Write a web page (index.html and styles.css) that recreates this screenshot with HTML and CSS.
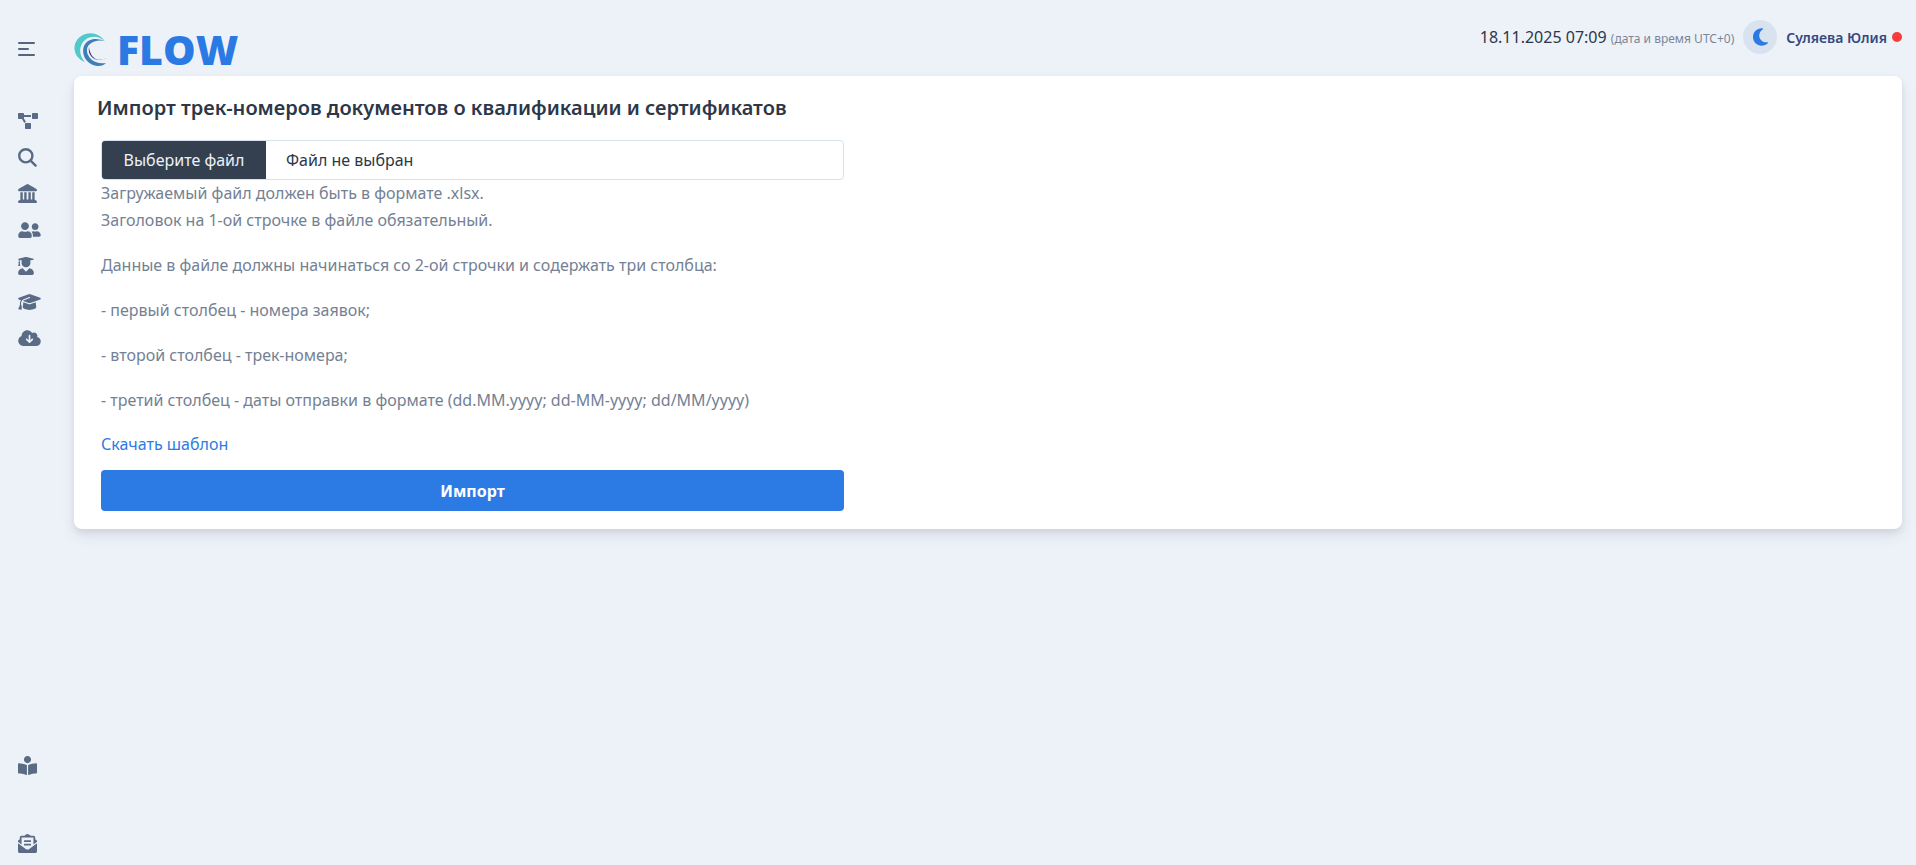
FILE: index.html
```html
<!DOCTYPE html>
<html lang="ru">
<head>
    <meta charset="UTF-8">
    <meta name="viewport" content="width=device-width, initial-scale=1.0">
    <title>Импорт трек-номеров</title>
    <link rel="stylesheet" href="styles.css">
</head>
<body>
    <div class="app">
        <aside class="sidebar">
            <button type="button" class="menu-toggle" aria-label="Меню">
                <span class="bar"></span>
                <span class="bar bar-short"></span>
                <span class="bar"></span>
            </button>

            <nav class="nav-group">
                <a class="nav-item" href="#"><svg class="icon" width="20" height="16" viewBox="0 0 640 512"><path d="M384 320H256c-17.67 0-32 14.33-32 32v128c0 17.67 14.33 32 32 32h128c17.67 0 32-14.33 32-32V352c0-17.67-14.33-32-32-32zM192 32c0-17.67-14.33-32-32-32H32C14.33 0 0 14.33 0 32v128c0 17.67 14.33 32 32 32h95.72l73.16 128.04C211.98 300.98 232.4 288 256 288h.28L192 175.51V128h224V64H192V32zM608 0H480c-17.67 0-32 14.33-32 32v128c0 17.67 14.33 32 32 32h128c17.67 0 32-14.33 32-32V32c0-17.67-14.33-32-32-32z"/></svg></a>
                <a class="nav-item" href="#"><svg class="icon icon-line" width="19" height="19" viewBox="0 0 19 19"><circle cx="7.8" cy="7.8" r="6.6"/><path d="M12.6 12.6l5 5"/></svg></a>
                <a class="nav-item" href="#"><svg class="icon" width="19" height="19" viewBox="0 0 512 512"><path d="M240.1 4.2c9.8-5.6 21.9-5.6 31.8 0l171.8 98.1L448 104l0 .9 47.9 27.4c12.6 7.2 18.8 22 15.1 36s-16.4 23.8-30.9 23.8H32c-14.5 0-27.2-9.8-30.9-23.8s2.5-28.8 15.1-36L64 104.9V104l4.4-1.6L240.1 4.2zM64 224h64V416h40V224h64V416h48V224h64V416h40V224h64V420.3c.6 .3 1.2 .7 1.8 1.1l48 32c11.7 7.8 17 22.4 12.9 35.9S494.1 512 480 512H32c-14.1 0-26.5-9.2-30.6-22.7s1.1-28.1 12.9-35.9l48-32c.6-.4 1.2-.7 1.8-1.1V224z"/></svg></a>
                <a class="nav-item" href="#"><svg class="icon" width="23" height="18" viewBox="0 0 640 512"><path d="M192 256c61.9 0 112-50.1 112-112S253.9 32 192 32 80 82.1 80 144s50.1 112 112 112zm76.8 32h-8.3c-20.8 10-43.9 16-68.5 16s-47.6-6-68.5-16h-8.3C51.6 288 0 339.6 0 403.2V432c0 26.5 21.5 48 48 48h288c26.5 0 48-21.5 48-48v-28.8c0-63.6-51.6-115.2-115.2-115.2zM480 256c53 0 96-43 96-96s-43-96-96-96-96 43-96 96 43 96 96 96zm48 32h-3.8c-13.9 4.8-28.6 8-44.2 8s-30.3-3.2-44.2-8H432c-20.4 0-39.2 5.9-55.7 15.4 24.4 26.3 39.7 61.2 39.7 99.8v38.4c0 2.2-.5 4.3-.6 6.4H592c26.5 0 48-21.5 48-48 0-61.9-50.1-112-112-112z"/></svg></a>
                <a class="nav-item" href="#"><svg class="icon" width="16" height="18" viewBox="0 0 448 512"><path d="M319.4 320.6L224 416l-95.4-95.4C57.1 323.7 0 382.2 0 454.4v9.6c0 26.5 21.5 48 48 48h352c26.5 0 48-21.5 48-48v-9.6c0-72.2-57.1-130.7-128.6-133.8zM13.6 79.8l6.4 1.5v58.4c-7 4.2-12 11.5-12 20.3 0 8.4 4.6 15.4 11.1 19.7L3.5 242c-1.7 6.9 2.1 14 7.6 14h41.8c5.5 0 9.3-7.1 7.6-14l-15.6-62.3C51.4 175.4 56 168.4 56 160c0-8.8-5-16.1-12-20.3V87.1l66 15.9c-8.6 17.2-14 36.4-14 57 0 70.7 57.3 128 128 128s128-57.3 128-128c0-20.6-5.3-39.8-14-57l96.3-23.2c18.2-4.4 18.2-27.1 0-31.5l-190.4-46c-13-3.1-26.7-3.1-39.7 0L13.6 48.2c-18.1 4.4-18.1 27.2 0 31.6z"/></svg></a>
                <a class="nav-item" href="#"><svg class="icon" width="23" height="18" viewBox="0 0 640 512"><path d="M320 32c-8.1 0-16.1 1.4-23.7 4.1L15.8 137.4C6.3 140.9 0 149.9 0 160s6.3 19.1 15.8 22.6l57.9 20.9C57.3 229.3 48 259.8 48 291.9v28.1c0 28.4-10.8 57.7-22.3 80.8c-6.5 13-13.9 25.8-22.5 37.6C0 442.7-.9 448.3 .9 453.4s6 8.9 11.2 10.2l64 16c4.2 1.1 8.7 .3 12.4-2s6.3-6.1 7.1-10.4c8.6-42.8 4.3-81.2-2.1-108.7C90.3 344.3 86 329.8 80 316.5V291.9c0-30.2 10.2-58.7 27.9-81.5c12.9-15.5 29.6-28 49.2-35.7l157-61.7c8.2-3.2 17.5 .8 20.7 9s-.8 17.5-9 20.7l-157 61.7c-12.4 4.9-23.3 12.4-32.2 21.6l159.6 57.6c7.6 2.7 15.6 4.1 23.7 4.1s16.1-1.4 23.7-4.1L624.2 182.6c9.5-3.4 15.8-12.5 15.8-22.6s-6.3-19.1-15.8-22.6L343.7 36.1C336.1 33.4 328.1 32 320 32zM128 408c0 35.3 86 72 192 72s192-36.7 192-72L496.7 262.6 354.5 314c-11.1 4-22.8 6-34.5 6s-23.5-2-34.5-6L143.3 262.6 128 408z"/></svg></a>
                <a class="nav-item" href="#"><svg class="icon" width="23" height="18" viewBox="0 0 640 512"><path d="M144 480C64.5 480 0 415.5 0 336c0-62.8 40.2-116.2 96.2-135.9c-.1-2.7-.2-5.4-.2-8.1c0-88.4 71.6-160 160-160c59.3 0 111 32.2 138.7 80.2C409.9 102 428.3 96 448 96c53 0 96 43 96 96c0 12.2-2.3 23.8-6.4 34.6C596 238.4 640 290.1 640 352c0 70.7-57.3 128-128 128H144zm79-167l80 80c9.4 9.4 24.6 9.4 33.9 0l80-80c9.4-9.4 9.4-24.6 0-33.9s-24.6-9.4-33.9 0l-39 39V184c0-13.3-10.7-24-24-24s-24 10.7-24 24V318.1l-39-39c-9.4-9.4-24.6-9.4-33.9 0s-9.4 24.6 0 33.9z"/></svg></a>
            </nav>

            <nav class="nav-group nav-bottom">
                <a class="nav-item" href="#"><svg class="icon" width="19" height="19" viewBox="0 0 512 512"><path d="M352 96c0-53.02-42.98-96-96-96s-96 42.98-96 96 42.98 96 96 96 96-42.98 96-96zM233.59 241.1c-59.33-36.32-155.43-46.3-203.79-49.05C13.55 191.13 0 203.51 0 219.14v222.8c0 14.33 11.59 26.28 26.49 27.05 43.66 2.29 131.99 10.68 193.04 41.43 9.37 4.72 20.48-1.71 20.48-11.87V252.56c-.01-4.67-2.32-8.95-6.42-11.46zm248.61-49.05c-48.35 2.74-144.46 12.73-203.78 49.05-4.1 2.51-6.41 6.96-6.41 11.63v245.79c0 10.19 11.14 16.63 20.54 11.9 61.04-30.72 149.32-39.11 192.97-41.4 14.9-.78 26.49-12.73 26.49-27.06V219.14c-.01-15.63-13.56-28.01-29.81-27.09z"/></svg></a>
                <a class="nav-item" href="#"><svg class="icon" width="19" height="19" viewBox="0 0 512 512"><path d="M176 216h160c8.84 0 16-7.16 16-16v-16c0-8.84-7.16-16-16-16H176c-8.84 0-16 7.16-16 16v16c0 8.84 7.16 16 16 16zm-16 80c0 8.84 7.16 16 16 16h160c8.84 0 16-7.16 16-16v-16c0-8.84-7.16-16-16-16H176c-8.84 0-16 7.16-16 16v16zm96 121.13c-16.42 0-32.84-5.06-46.86-15.19L0 250.86V464c0 26.51 21.49 48 48 48h416c26.51 0 48-21.49 48-48V250.86L302.86 401.94c-14.02 10.12-30.44 15.19-46.86 15.19zm237.61-254.18c-8.85-6.94-17.24-13.47-29.61-22.81V96c0-26.51-21.49-48-48-48h-77.55c-3.04-2.2-5.87-4.26-9.04-6.56C312.6 29.17 279.2-.35 256 0c-23.2-.35-56.59 29.17-73.41 41.44-3.17 2.3-6 4.36-9.04 6.56H96c-26.51 0-48 21.49-48 48v44.14c-12.37 9.33-20.76 15.87-29.61 22.81A47.995 47.995 0 0 0 0 200.72v10.65l96 69.35V96h320v184.72l96-69.35v-10.65c0-14.74-6.78-28.67-18.39-37.77z"/></svg></a>
            </nav>
        </aside>

        <div class="content">
            <header class="topbar">
                <a class="logo" href="#">
                    <svg class="logo-mark" width="34" height="35" viewBox="0 0 34 35">
                        <path fill="#4fc9c9" d="M31 10C25-2 6-2 1 12C-1 20 3 27 11 30C5 24 4 14 11 8C17 3 26 4 31 10Z"/>
                        <path fill="#3f7fb8" d="M30 9C22 5 13 7 10 14C7 22 12 33 24 34C28 34 30 33 32 31C22 33 12 26 13 17C14 11 22 7 30 9Z"/>
                        <path fill="#3b2f86" d="M15 15C13 24 22 32 33 26C26 30 19 27 17 22C16 20 15 17 15 15Z"/>
                    </svg>
                    <span class="logo-text">FLOW</span>
                </a>
                <div class="user-info">
                    <div class="datetime">18.11.2025 07:09 <small>(дата и время UTC+0)</small></div>
                    <button type="button" class="theme-btn" aria-label="Тема">
                        <svg width="15" height="20" viewBox="0 0 384 512"><path d="M223.5 32C100 32 0 132.3 0 256S100 480 223.5 480c60.6 0 115.5-24.2 155.8-63.4c5-4.9 6.3-12.5 3.1-18.7s-10.1-9.7-17-8.5c-9.8 1.7-19.8 2.6-30.1 2.6c-96.9 0-175.5-78.8-175.5-176c0-65.8 36-123.1 89.3-153.3c6.1-3.5 9.2-10.5 7.7-17.3s-7.3-11.9-14.3-12.5c-6.3-.5-12.6-.8-19-.8z"/></svg>
                    </button>
                    <a class="user-name" href="#">Суляева Юлия</a>
                    <span class="status-dot"></span>
                </div>
            </header>

            <main class="card">
                <h1 class="card-title">Импорт трек-номеров документов о квалификации и сертификатов</h1>
                <form class="import-form">
                    <label class="file-field">
                        <span class="file-btn">Выберите файл</span>
                        <span class="file-name">Файл не выбран</span>
                    </label>
                    <div class="hint">
                        <p class="hint-head">Загружаемый файл должен быть в формате .xlsx.<br>Заголовок на 1-ой строчке в файле обязательный.</p>
                        <p>Данные в файле должны начинаться со 2-ой строчки и содержать три столбца:</p>
                        <p>- первый столбец - номера заявок;</p>
                        <p>- второй столбец - трек-номера;</p>
                        <p>- третий столбец - даты отправки в формате (dd.MM.yyyy; dd-MM-yyyy; dd/MM/yyyy)</p>
                    </div>
                    <a class="template-link" href="#">Скачать шаблон</a>
                    <button type="button" class="import-btn">Импорт</button>
                </form>
            </main>
        </div>
    </div>
</body>
</html>
```

FILE: styles.css
```css
* { box-sizing: border-box; }

html, body { height: 100%; }

body {
    margin: 0;
    background: #edf2f9;
    color: #2d3748;
    font-family: "Noto Sans", "Open Sans", sans-serif;
    font-size: 16px;
    overflow: hidden;
}

a { text-decoration: none; }

.app { display: flex; height: 100vh; }

/* sidebar */
.sidebar {
    width: 74px;
    flex-shrink: 0;
    display: flex;
    flex-direction: column;
    padding: 42px 0 3px 18px;
}

.menu-toggle {
    display: flex;
    flex-direction: column;
    justify-content: space-between;
    width: 17px;
    height: 14px;
    padding: 0;
    margin-bottom: 47px;
    border: 0;
    background: none;
}

.bar { display: block; width: 17px; height: 2px; background: #56657d; border-radius: 1px; }
.bar-short { width: 11px; }

.nav-group { display: flex; flex-direction: column; }

.nav-bottom { margin-top: auto; gap: 42px; }

.nav-item { display: flex; align-items: center; height: 36.2px; }

.icon { fill: #5a6b85; }
.icon-line { fill: none; stroke: #5a6b85; stroke-width: 2.4; stroke-linecap: round; }

/* top bar */
.content { flex: 1; min-width: 0; display: flex; flex-direction: column; padding-right: 14px; }

.topbar { height: 76px; display: flex; justify-content: space-between; padding-top: 20px; }

.logo { display: flex; align-items: flex-start; gap: 9px; padding-top: 12px; height: 56px; }

.logo-text {
    color: #2b7ae4;
    font-family: "Open Sans", sans-serif;
    font-size: 41px;
    font-weight: 800;
    line-height: 34px;
}

.user-info { display: flex; align-items: center; height: 34px; }

.datetime { font-size: 16px; color: #2d3748; }
.datetime small { font-size: 12px; color: #7a8699; }

.theme-btn {
    display: flex;
    align-items: center;
    justify-content: center;
    width: 34px;
    height: 34px;
    margin: 0 9px;
    padding: 0;
    border: 0;
    border-radius: 50%;
    background: #d9e3f0;
}

.theme-btn svg { fill: #2b7ae4; }

.user-name { font-size: 14px; font-weight: 600; color: #36497f; }

.status-dot { width: 10px; height: 10px; margin-left: 5px; border-radius: 50%; background: #f83c3c; }

/* card */
.card {
    height: 453px;
    padding: 18px 23px;
    background: #fff;
    border-radius: 8px;
    box-shadow: 0 7px 14px rgba(65, 69, 88, 0.1), 0 3px 6px rgba(0, 0, 0, 0.07);
}

.card-title { margin: 0 0 18px; font-size: 20px; line-height: 28px; font-weight: 600; color: #2d3748; }

.import-form { width: 743px; margin-left: 4px; }

.file-field {
    display: flex;
    height: 40px;
    border: 1px solid #d8e2ef;
    border-radius: 4px;
    overflow: hidden;
}

.file-btn {
    display: flex;
    align-items: center;
    justify-content: center;
    width: 164px;
    background: #344050;
    color: #edf2f9;
}

.file-name { display: flex; align-items: center; padding-left: 20px; color: #2d3748; }

.hint { color: #748194; line-height: 27px; }
.hint p { margin: 0 0 18px; }
.hint-head { margin-top: 1px; }

.template-link { display: block; color: #2c7be5; line-height: 27px; margin-top: -1px; }

.import-btn {
    display: block;
    width: 100%;
    height: 41px;
    margin-top: 12px;
    border: 0;
    border-radius: 4px;
    background: #2c7be5;
    color: #fff;
    font-family: inherit;
    font-size: 16px;
    font-weight: 700;
}
```
